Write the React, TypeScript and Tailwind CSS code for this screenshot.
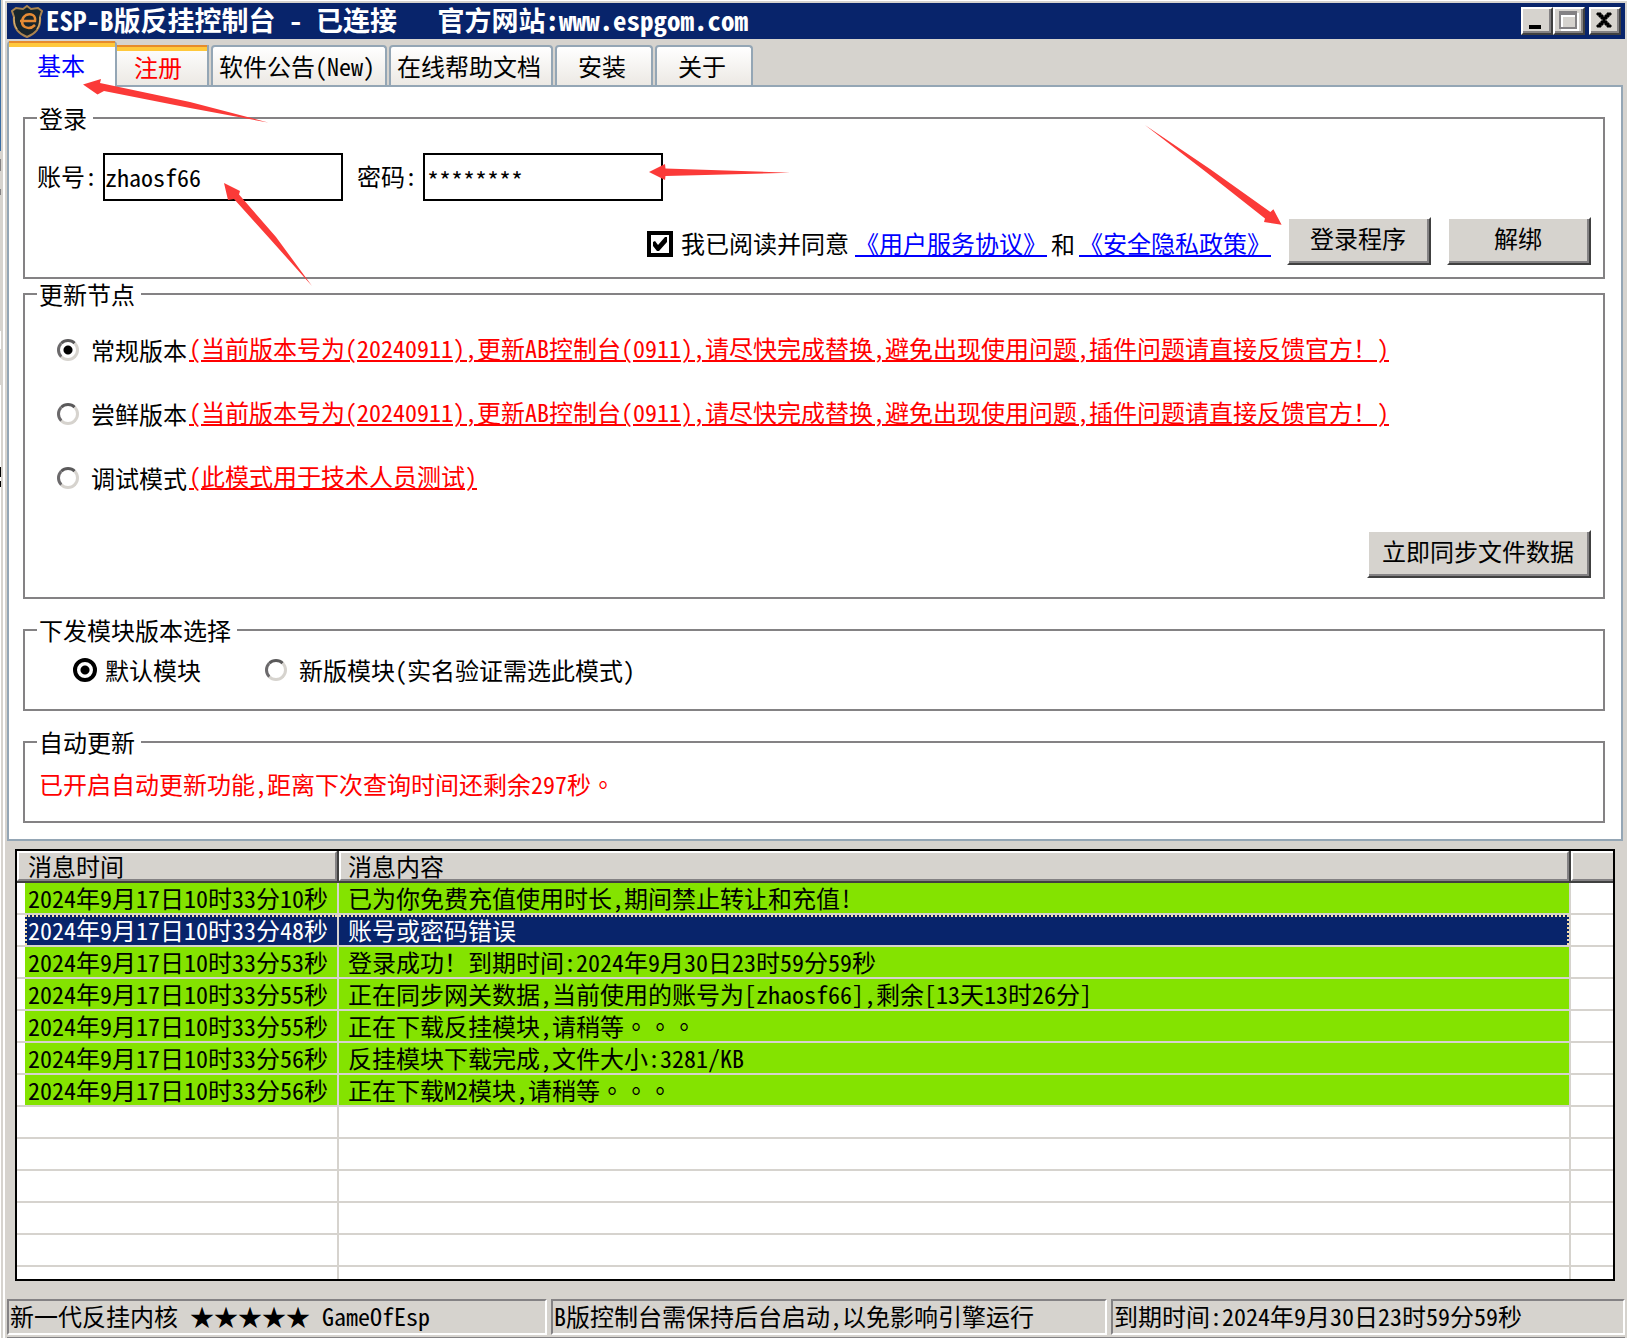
import React from "react";

const tabs = [
  { label: "软件公告(New)", width: "w-[176px]" },
  { label: "在线帮助文档", width: "w-[164px]" },
  { label: "安装", width: "w-[98px]" },
  { label: "关于", width: "w-[98px]" },
];

const updateNotice =
  "(当前版本号为(20240911),更新AB控制台(0911),请尽快完成替换,避免出现使用问题,插件问题请直接反馈官方！)";

const nodes = [
  { id: "stable", label: "常规版本", note: updateNotice },
  { id: "preview", label: "尝鲜版本", note: updateNotice },
  { id: "debug", label: "调试模式", note: "(此模式用于技术人员测试)" },
];

const messages = [
  { time: "2024年9月17日10时33分10秒", text: "已为你免费充值使用时长,期间禁止转让和充值!" },
  { time: "2024年9月17日10时33分48秒", text: "账号或密码错误", selected: true },
  { time: "2024年9月17日10时33分53秒", text: "登录成功！到期时间:2024年9月30日23时59分59秒" },
  { time: "2024年9月17日10时33分55秒", text: "正在同步网关数据,当前使用的账号为[zhaosf66],剩余[13天13时26分]" },
  { time: "2024年9月17日10时33分55秒", text: "正在下载反挂模块,请稍等", dots: "。。。" },
  { time: "2024年9月17日10时33分56秒", text: "反挂模块下载完成,文件大小:3281/KB" },
  { time: "2024年9月17日10时33分56秒", text: "正在下载M2模块,请稍等", dots: "。。。" },
];

const ShieldLogo = () => (
  <svg width="32" height="34" viewBox="0 0 32 34" aria-hidden="true">
    <path
      d="M16 2 L20 5 L27 4 L31 7 L29 13 C30 22 26 29 16 33 C6 29 2 22 3 13 L1 7 L5 4 L12 5 Z"
      fill="#17252c"
      stroke="#a98450"
      strokeWidth="2"
    />
    <path d="M3 13 C3 19 4 22 6 25 M29 13 C29 19 28 22 26 25" fill="none" stroke="#e0b878" strokeWidth="1" />
    <path
      d="M9 17 H24 C25 11 20 9 15 11 C10 14 10 21 14 23 C18 25 21 24 24 21"
      fill="none"
      stroke="#e58a35"
      strokeWidth="2.5"
    />
  </svg>
);

// Full stops sit in the middle of their cell
const Dots = ({ children }: { children: React.ReactNode }) => (
  <span lang="zh-TW" className="font-['Noto_Sans_Mono_CJK_TC','Noto_Sans_CJK_TC',monospace]">
    {children}
  </span>
);

type WindowButtonProps = {
  label: string;
  children: React.ReactNode;
};

const WindowButton = ({ label, children }: WindowButtonProps) => (
  <button
    type="button"
    aria-label={label}
    className="h-7 w-8 border-2 border-t-white border-l-white border-r-[#404040] border-b-[#404040] bg-[#d6d3ce]"
  >
    <span className="flex h-full w-full border-r-2 border-b-2 border-[#848284]">
      {children}
    </span>
  </button>
);

type PushButtonProps = {
  width: string;
  children: React.ReactNode;
};

const PushButton = ({ width, children }: PushButtonProps) => (
  <button
    type="button"
    className={`h-12 ${width} border-2 border-t-white border-l-white border-r-[#404040] border-b-[#404040] bg-[#d6d3ce]`}
  >
    <span className="flex h-full items-center justify-center border-r-2 border-b-2 border-[#848284] pb-1">
      {children}
    </span>
  </button>
);

type GroupProps = {
  title: string;
  className?: string;
  children: React.ReactNode;
};

const Group = ({ title, className = "", children }: GroupProps) => (
  <fieldset className={`border-2 border-[#848284] ${className}`}>
    <legend className="ml-3 pl-0.5 pr-1.5 leading-6">{title}</legend>
    {children}
  </fieldset>
);

const radioClass =
  "size-[22px] shrink-0 appearance-none rounded-full border-[3px] border-t-[#5a595a] border-l-[#6b696b] border-r-[#d6d3ce] border-b-[#d6d3ce] bg-white checked:bg-[radial-gradient(circle,#000_4px,transparent_5px)]";

const focusedRadioClass =
  "size-6 shrink-0 appearance-none rounded-full border-4 border-black bg-white checked:bg-[radial-gradient(circle,#000_4px,transparent_5px)]";

const linkClass = "whitespace-nowrap underline decoration-2 underline-offset-2";

const LoginGroup = () => (
  <Group title="登录" className="h-[173px]">
    <div className="mt-[23px] flex items-center pl-3">
      <label htmlFor="account" className="pb-0.5">
        账号:
      </label>
      <input
        id="account"
        defaultValue="zhaosf66"
        className="ml-1.5 h-12 w-60 border-2 border-black pb-0.5 outline-none"
      />
      <label htmlFor="password" className="ml-3.5 pb-0.5">
        密码:
      </label>
      <input
        id="password"
        defaultValue="********"
        className="ml-1.5 h-12 w-60 border-2 border-black pt-1 pl-0.5 outline-none"
      />
    </div>
    <div className="mt-4 flex items-center justify-end pr-3">
      <label className="mt-1.5 flex items-center gap-2">
        <span className="grid">
          <input
            type="checkbox"
            defaultChecked
            className="col-start-1 row-start-1 size-[26px] appearance-none border-4 border-black bg-white"
          />
          <svg
            viewBox="0 0 26 26"
            className="pointer-events-none col-start-1 row-start-1 size-[26px]"
          >
            <path d="M6 11 L8 10 L11 14 L18 6 H20 V11 L12 20 H10 L6 15 Z" fill="#000" />
          </svg>
        </span>
        <span className="pb-0.5">我已阅读并同意</span>
      </label>
      <a href="#terms" className={`mt-1 ml-1.5 text-[#0000ff] ${linkClass}`}>
        《用户服务协议》
      </a>
      <span className="mx-1 mt-1.5">和</span>
      <a href="#privacy" className={`mt-1 text-[#0000ff] ${linkClass}`}>
        《安全隐私政策》
      </a>
      <div className="ml-4 flex gap-4">
        <PushButton width="w-36">登录程序</PushButton>
        <PushButton width="w-36">解绑</PushButton>
      </div>
    </div>
  </Group>
);

const NodeGroup = () => (
  <Group title="更新节点" className="mt-[3px] h-[317px]">
    <div className="flex flex-col gap-10 pt-8 pl-8">
      {nodes.map((node, index) => (
        <div key={node.id} className="flex h-6 items-center">
          <input
            id={node.id}
            type="radio"
            name="node"
            defaultChecked={index === 0}
            className={radioClass}
          />
          <label htmlFor={node.id} className="mr-0.5 ml-3">
            {node.label}
          </label>
          <a href={`#${node.id}`} className={`pb-1 text-[#ff0000] ${linkClass}`}>
            {node.note}
          </a>
        </div>
      ))}
    </div>
    <div className="mt-10 flex justify-end pr-3">
      <PushButton width="w-56">立即同步文件数据</PushButton>
    </div>
  </Group>
);

const ModuleGroup = () => (
  <Group title="下发模块版本选择" className="mt-[19px] h-[93px]">
    <div className="mt-4 flex items-center pl-12">
      <label className="flex items-center gap-2">
        <input type="radio" name="module" defaultChecked className={focusedRadioClass} />
        默认模块
      </label>
      <label className="ml-16 flex items-center gap-3">
        <input type="radio" name="module" className={radioClass} />
        新版模块(实名验证需选此模式)
      </label>
    </div>
  </Group>
);

const headCell =
  "border-2 border-t-white border-l-white border-r-[#848284] border-b-[#848284] text-left leading-[26px]";

const MessageTable = () => (
  <div className="mr-2.5 ml-2 mt-2 h-[432px] overflow-hidden border-2 border-black bg-white">
    <table className="w-full table-fixed border-separate border-spacing-0">
      <colgroup>
        <col className="w-2" />
        <col className="w-[314px]" />
        <col />
        <col className="w-[42px]" />
      </colgroup>
      <thead>
        <tr className="h-8 bg-[#d6d3ce]">
          <th colSpan={2} className="border-r-2 border-b-2 border-[#404040] p-0 font-normal">
            <div className={`pl-[9px] ${headCell}`}>消息时间</div>
          </th>
          <th className="border-r-2 border-b-2 border-[#404040] p-0 font-normal">
            <div className={`pl-[7px] ${headCell}`}>消息内容</div>
          </th>
          <th className="border-b-2 border-[#404040] p-0">
            <div className="h-[30px] border-t-2 border-b-2 border-l-2 border-t-white border-b-[#848284] border-l-white" />
          </th>
        </tr>
      </thead>
      <tbody>
        {messages.map((message, index) => {
          const fill = message.selected ? "bg-[#08246b] text-white" : "bg-[#84e300]";
          const focusRing = message.selected ? "border-dotted border-[#f7dfa5]" : "border-transparent";
          return (
            <tr key={index} className="h-8">
              <td className="border-b-2 border-[#d6d3ce] p-0" />
              <td className="border-r-2 border-b-2 border-[#d6d3ce] p-0">
                <div className={`h-[30px] border-t-2 border-l-2 pl-px leading-[26px] whitespace-nowrap ${fill} ${focusRing}`}>
                  {message.time}
                </div>
              </td>
              <td className="border-r-2 border-b-2 border-[#d6d3ce] p-0">
                <div className={`h-[30px] border-t-2 border-r-2 pl-[9px] leading-[26px] whitespace-nowrap ${fill} ${focusRing}`}>
                  {message.text}
                  {message.dots && <Dots>{message.dots}</Dots>}
                </div>
              </td>
              <td className="border-b-2 border-[#d6d3ce] p-0" />
            </tr>
          );
        })}
        {[0, 1, 2, 3, 4, 5].map((row) => (
          <tr key={row} className="h-8">
            <td className="border-b-2 border-[#d6d3ce] p-0" />
            <td className="border-r-2 border-b-2 border-[#d6d3ce] p-0" />
            <td className="border-r-2 border-b-2 border-[#d6d3ce] p-0" />
            <td className="border-b-2 border-[#d6d3ce] p-0" />
          </tr>
        ))}
      </tbody>
    </table>
  </div>
);

const statusCell =
  "h-9 border-2 border-t-[#848284] border-l-[#848284] border-r-white border-b-white pl-px leading-[30px] whitespace-pre";

const StatusBar = () => (
  <footer className="mt-[18px] flex gap-1">
    <div className={`w-[540px] ${statusCell}`}>新一代反挂内核 ★★★★★ GameOfEsp</div>
    <div className={`w-[556px] ${statusCell}`}>B版控制台需保持后台启动,以免影响引擎运行</div>
    <div className={`flex-1 ${statusCell}`}>到期时间:2024年9月30日23时59分59秒</div>
  </footer>
);

// Red pointers drawn over the form
const Pointers = () => (
  <>
    <svg
      className="pointer-events-none absolute top-0 left-0 z-20"
      width="800"
      height="300"
      viewBox="0 0 800 300"
      fill="#fb3a38"
      aria-hidden="true"
    >
      <path d="M83 84.5 L101 79 L100 83 L190 102 L268 122.5 L190 108 L104 91 L97.5 94.5 Z" />
      <path d="M224 183 L240 191 L239 194.5 L276 237 L312 286 L270 239 L234 199 L228 200 Z" />
      <path d="M649 172 L665 164 L665.5 168.5 L790 172.7 L665.5 176 L665 180 Z" />
    </svg>
    <svg
      className="pointer-events-none absolute top-0 right-0 z-20"
      width="500"
      height="300"
      viewBox="1127 0 500 300"
      fill="#fb3a38"
      aria-hidden="true"
    >
      <path d="M1281.6 224.7 L1273.4 209.3 L1270.4 212 L1210 169 L1144.9 125 L1206 172 L1265 218.5 L1264 222 Z" />
    </svg>
  </>
);

export default function App() {
  return (
    <div className="relative flex min-h-screen bg-[#d6d3ce] font-['Noto_Sans_Mono_CJK_SC','Noto_Sans_CJK_SC',monospace] text-2xl leading-6 text-black [text-spacing-trim:space-all]">
      {/* sliver of the window behind */}
      <div className="flex w-px shrink-0 flex-col">
        <div className="h-[151px] bg-[#3a6ea5]" />
        <div className="mt-2 h-3 bg-[#848284]" />
        <div className="mt-[18px] h-1.5 bg-[#848284]" />
        <div className="mt-[136px] h-[18px] bg-white" />
        <div className="mt-9 flex-1 bg-white pt-[82px]">
          <div className="h-2.5 bg-black" />
          <div className="mt-1 h-1.5 bg-black" />
        </div>
      </div>
      <div className="ml-0.5 w-0.5 shrink-0 bg-white" />
      <div className="min-w-0 flex-1 border-t border-white pt-0.5 pr-0.5 pl-0.5">
        <header className="flex h-9 items-center bg-[#08246b] pr-1 text-white">
          <div className="ml-1 shrink-0">
            <ShieldLogo />
          </div>
          <h1 className="ml-[3px] flex-1 pb-0.5 text-[27px] font-bold whitespace-pre">
            ESP-B版反挂控制台 - 已连接   官方网站:www.espgom.com
          </h1>
          <WindowButton label="最小化">
            <span className="mb-0.5 ml-1.5 h-1 w-3 self-end bg-black" />
          </WindowButton>
          <WindowButton label="最大化">
            <span className="mt-0.5 ml-1 h-[18px] w-[18px] border-2 border-t-4 border-[#848284] shadow-[2px_2px_0_#fff,inset_2px_2px_0_#fff]" />
          </WindowButton>
          <div className="ml-1 flex">
            <WindowButton label="关闭">
              <svg width="26" height="22" viewBox="0 0 26 22">
                <path
                  d="M6 4 H10 V6 H12 V8 H14 V6 H16 V4 H20 V6 H18 V8 H16 V10 H14 V12 H16 V14 H18 V16 H20 V18 H16 V16 H14 V14 H12 V16 H10 V18 H6 V16 H8 V14 H10 V12 H12 V10 H10 V8 H8 V6 H6 Z"
                  fill="#000"
                  stroke="#000"
                />
              </svg>
            </WindowButton>
          </div>
        </header>

        <nav className="flex h-[46px] items-end" role="tablist">
          <button
            role="tab"
            aria-selected="true"
            type="button"
            className="relative z-10 -mb-0.5 flex h-[46px] w-[110px] flex-col rounded-t-sm border-r-2 border-l-2 border-[#94a6b5] bg-white text-left text-[#0000ff]"
          >
            <span className="h-1.5 w-full border-t-2 border-[#e68b2c] bg-[#ffc83c]" />
            <span className="pt-1.5 pl-7">基本</span>
          </button>
          <button
            role="tab"
            type="button"
            className="mr-0.5 flex h-10 w-[92px] flex-col border-r-2 border-[#94a6b5] bg-linear-to-b from-white to-[#ece9e4] text-[#ff0000]"
          >
            <span className="h-1.5 w-full border-t-2 border-[#e68b2c] bg-[#ffc83c]" />
            <span className="w-full pt-1 pr-2 text-center">注册</span>
          </button>
          {tabs.map((tab) => (
            <button
              key={tab.label}
              role="tab"
              type="button"
              className={`mr-0.5 h-10 rounded-t-sm border-2 border-b-0 border-[#94a6b5] bg-linear-to-b from-white to-[#ece9e4] pr-1 whitespace-nowrap ${tab.width}`}
            >
              {tab.label}
            </button>
          ))}
        </nav>

        <main className="mr-0.5 border-2 border-[#94a6b5] bg-white pt-[19px] pr-4 pb-4 pl-3.5">
          <LoginGroup />
          <NodeGroup />
          <ModuleGroup />
          <Group title="自动更新" className="mt-[19px] h-[93px]">
            <p className="mt-[18px] pl-3.5 text-[#ff0000]">
              已开启自动更新功能,距离下次查询时间还剩余297秒<Dots>。</Dots>
            </p>
          </Group>
        </main>

        <MessageTable />
        <StatusBar />
        <div className="h-[3px] border-b border-[#848284]" />
      </div>
      <Pointers />
    </div>
  );
}
